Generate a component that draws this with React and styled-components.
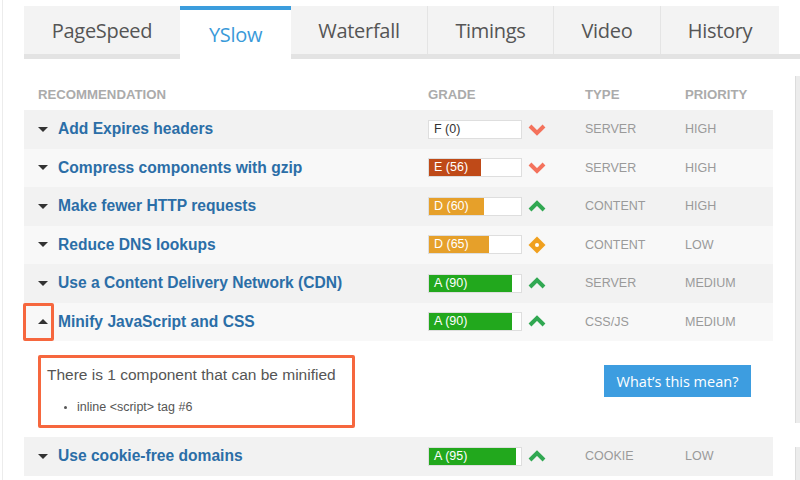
import styled, { createGlobalStyle } from "styled-components";

const GlobalStyle = createGlobalStyle`
  html, body {
    margin: 0;
    padding: 0;
    background: #fff;
  }
  body {
    font-family: "Liberation Sans", Arial, sans-serif;
    width: 800px;
    height: 480px;
    overflow: hidden;
  }
`;

const Page = styled.div`
  display: flex;
  height: 480px;
  margin-left: 2px;
  border-left: 1px solid #ececec;
`;

const Main = styled.div`
  flex: 1;
  padding-left: 21px;
  padding-top: 6px;
  display: flex;
  flex-direction: column;
`;

const TabBar = styled.div`
  display: flex;
  flex-shrink: 0;
  height: 48px;
  border-bottom: 5px solid #e3e3e3;
  box-sizing: content-box;
`;

const Tab = styled.div`
  width: ${(p) => p.$w}px;
  box-sizing: border-box;
  display: flex;
  align-items: center;
  justify-content: center;
  font-family: "Open Sans", "Noto Sans", sans-serif;
  font-size: 20px;
  letter-spacing: -0.3px;
  color: ${(p) => (p.$active ? "#3a9ad9" : "#555")};
  background: ${(p) => (p.$active ? "#fff" : "#f3f3f3")};
  border-top: ${(p) => (p.$active ? "4px solid #3b9ddd" : "none")};
  border-left: ${(p) => (p.$first || p.$active ? "none" : "1px solid #e4e4e4")};
  margin-bottom: ${(p) => (p.$active ? "-5px" : "0")};
  padding-bottom: ${(p) => (p.$active ? "1px" : "0")};
`;

const Body = styled.div`
  display: flex;
  flex: 1;
`;

const Table = styled.div`
  width: 749px;
  display: flex;
  flex-direction: column;
`;

const SidePanel = styled.div`
  margin-left: 22px;
  flex: 1;
  display: flex;
  flex-direction: column;
  gap: 24px;
  padding-top: 17px;
`;

const SideBlock = styled.div`
  height: ${(p) => p.$h}px;
  flex-shrink: 0;
  background: #ececec;
  border-left: 1px solid #dcdcdc;
`;

const Columns = `
  display: grid;
  grid-template-columns: 30px 374px 157px 100px 1fr;
  align-items: center;
  flex-shrink: 0;
`;

const HeaderRow = styled.div`
  ${Columns}
  height: 34px;
  margin-top: 17px;
  font-size: 13.2px;
  font-weight: bold;
  color: #ababab;
`;

const HeadCell = styled.div`
  grid-column: ${(p) => p.$col};
  padding-left: ${(p) => p.$pad || 0}px;
  padding-top: 2px;
`;

const Row = styled.div`
  ${Columns}
  height: 38.5px;
  background: ${(p) => (p.$alt ? "#f8f8f8" : "#f2f2f2")};
`;

const CaretCell = styled.div`
  height: 100%;
  box-sizing: border-box;
  display: flex;
  align-items: center;
  padding-left: 14px;
  ${(p) =>
    p.$marked &&
    `
    border: 3px solid #f6673e;
    border-radius: 2px;
    margin-left: -1px;
    padding-left: 12px;
  `}
`;

const Caret = styled.span`
  width: 0;
  height: 0;
  border-left: 5px solid transparent;
  border-right: 5px solid transparent;
  ${(p) =>
    p.$up ? "border-bottom: 5.5px solid #333;" : "border-top: 5.5px solid #333;"}
`;

const Title = styled.div`
  padding-left: 4px;
  font-size: 15.6px;
  font-weight: bold;
  color: #2b6ea7;
  white-space: nowrap;
`;

const GradeCell = styled.div`
  display: flex;
  align-items: center;
  gap: 6px;
`;

const GradeBox = styled.div`
  width: 94px;
  height: 19px;
  box-sizing: border-box;
  border: 1px solid #dedede;
  background: #fff;
  position: relative;
  display: flex;
`;

const GradeFill = styled.div`
  height: 100%;
  background: ${(p) => p.$color};
`;

const GradeText = styled.span`
  position: absolute;
  left: 5px;
  top: 0;
  line-height: 17px;
  font-size: 12.5px;
  color: ${(p) => (p.$dark ? "#333" : "#fff")};
  white-space: nowrap;
`;

const Meta = styled.div`
  font-size: 12.5px;
  color: #9a9a9a;
`;

const Detail = styled.div`
  height: 96px;
  flex-shrink: 0;
  display: flex;
  justify-content: space-between;
  align-items: flex-start;
  padding: 14px 22px 0 14px;
  box-sizing: border-box;
  background: #fff;
`;

const NoteBox = styled.div`
  width: 317px;
  height: 73px;
  box-sizing: border-box;
  border: 3px solid #f6673e;
  border-radius: 2px;
  padding: 8px 0 0 6px;
  color: #555;
`;

const NoteTitle = styled.div`
  font-size: 15.5px;
`;

const NoteList = styled.ul`
  margin: 16px 0 0 0;
  padding-left: 30px;
  font-size: 12.5px;
  color: #555;
  li::marker {
    font-size: 10px;
  }
`;

const HelpButton = styled.button`
  margin-top: 10px;
  width: 147px;
  height: 32px;
  border: none;
  background: #3d9de0;
  color: #fff;
  font-family: "Open Sans", "Noto Sans", sans-serif;
  font-size: 14.5px;
  cursor: pointer;
`;

const ICON_COLORS = { down: "#f4725c", up: "#31a852", mid: "#f0a01e" };

const GradeIcon = ({ kind }) => {
  if (kind === "mid") {
    return (
      <svg width="18" height="18" viewBox="0 0 18 18">
        <rect x="3" y="3" width="12" height="12" transform="rotate(45 9 9)" fill={ICON_COLORS.mid} />
        <circle cx="9" cy="9" r="2" fill="#fff" />
      </svg>
    );
  }
  const d = kind === "down" ? "M2 3 L9 10 L16 3" : "M2 10 L9 3 L16 10";
  return (
    <svg width="18" height="13" viewBox="0 0 18 13">
      <path d={d} fill="none" stroke={ICON_COLORS[kind]} strokeWidth="4" strokeLinejoin="miter" />
    </svg>
  );
};

const GRADE_COLORS = { F: "#fff", E: "#bf4a18", D: "#e6a02a", A: "#22a81d" };

const Grade = ({ letter, score, icon }) => (
  <GradeCell>
    <GradeBox>
      <GradeFill $color={GRADE_COLORS[letter]} style={{ width: `${score}%` }} />
      <GradeText $dark={letter === "F"}>
        {letter} ({score})
      </GradeText>
    </GradeBox>
    <GradeIcon kind={icon} />
  </GradeCell>
);

const tabs = [
  { label: "PageSpeed", w: 156 },
  { label: "YSlow", w: 111, active: true },
  { label: "Waterfall", w: 136 },
  { label: "Timings", w: 126 },
  { label: "Video", w: 107 },
  { label: "History", w: 119 },
];

const rows = [
  { title: "Add Expires headers", letter: "F", score: 0, icon: "down", type: "SERVER", priority: "HIGH" },
  { title: "Compress components with gzip", letter: "E", score: 56, icon: "down", type: "SERVER", priority: "HIGH" },
  { title: "Make fewer HTTP requests", letter: "D", score: 60, icon: "up", type: "CONTENT", priority: "HIGH" },
  { title: "Reduce DNS lookups", letter: "D", score: 65, icon: "mid", type: "CONTENT", priority: "LOW" },
  { title: "Use a Content Delivery Network (CDN)", letter: "A", score: 90, icon: "up", type: "SERVER", priority: "MEDIUM" },
  { title: "Minify JavaScript and CSS", letter: "A", score: 90, icon: "up", type: "CSS/JS", priority: "MEDIUM", open: true },
  { title: "Use cookie-free domains", letter: "A", score: 95, icon: "up", type: "COOKIE", priority: "LOW" },
];

const RecRow = ({ r, alt }) => (
  <Row $alt={alt}>
    <CaretCell $marked={r.open}>
      <Caret $up={r.open} />
    </CaretCell>
    <Title>{r.title}</Title>
    <Grade letter={r.letter} score={r.score} icon={r.icon} />
    <Meta>{r.type}</Meta>
    <Meta>{r.priority}</Meta>
  </Row>
);

export default function App() {
  return (
    <>
      <GlobalStyle />
      <Page>
        <Main>
          <TabBar>
            {tabs.map((t, i) => (
              <Tab key={t.label} $w={t.w} $active={t.active} $first={i === 0 || tabs[i - 1].active}>
                {t.label}
              </Tab>
            ))}
          </TabBar>
          <Body>
            <Table>
              <HeaderRow>
                <HeadCell $col="1 / 3" $pad={14}>RECOMMENDATION</HeadCell>
                <HeadCell $col="3">GRADE</HeadCell>
                <HeadCell $col="4">TYPE</HeadCell>
                <HeadCell $col="5">PRIORITY</HeadCell>
              </HeaderRow>
              {rows.slice(0, 6).map((r, i) => (
                <RecRow key={r.title} r={r} alt={i % 2 === 1} />
              ))}
              <Detail>
                <NoteBox>
                  <NoteTitle>There is 1 component that can be minified</NoteTitle>
                  <NoteList>
                    <li>inline &lt;script&gt; tag #6</li>
                  </NoteList>
                </NoteBox>
                <HelpButton>What’s this mean?</HelpButton>
              </Detail>
              <RecRow r={rows[6]} alt={false} />
            </Table>
            <SidePanel>
              <SideBlock $h={347} />
              <SideBlock $h={40} />
            </SidePanel>
          </Body>
        </Main>
      </Page>
    </>
  );
}
